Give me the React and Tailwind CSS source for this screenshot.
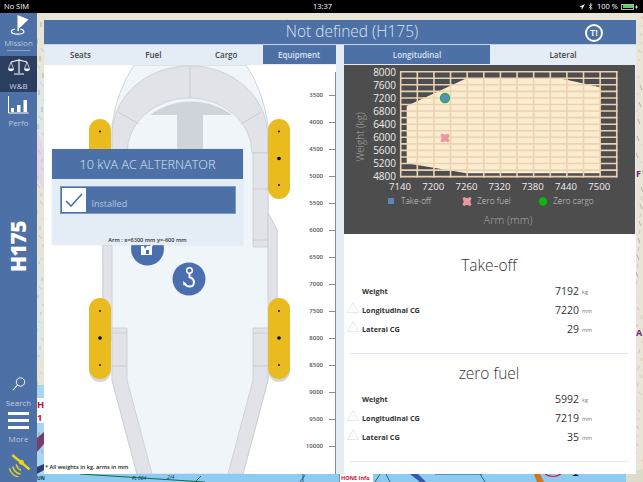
import { Fragment } from 'react';

const font = { fontFamily: '"Open Sans", "Liberation Sans", sans-serif' };

const RULER = ['3500', '4000', '4500', '5000', '5500', '6000', '6500', '7000', '7500', '8000', '8500', '9000', '9500', '10000'];
const Y_LABELS = [8000, 7600, 7200, 6800, 6400, 6000, 5600, 5200, 4800];
const X_LABELS = [7140, 7200, 7260, 7320, 7380, 7440, 7500];

const TAKE_OFF = [
  { label: 'Weight', value: '7192', unit: 'kg' },
  { label: 'Longitudinal CG', value: '7220', unit: 'mm', warn: true },
  { label: 'Lateral CG', value: '29', unit: 'mm', warn: true },
];
const ZERO_FUEL = [
  { label: 'Weight', value: '5992', unit: 'kg' },
  { label: 'Longitudinal CG', value: '7219', unit: 'mm', warn: true },
  { label: 'Lateral CG', value: '35', unit: 'mm', warn: true },
];

function MapBackground() {
  const specks = [];
  for (let i = 0; i < 150; i++) {
    const y = 13 + (i * 37) % 461;
    const left = i % 3 === 0;
    const x = left ? 37 + (i * 5) % 7 : i % 3 === 1 ? 636 + (i * 3) % 7 : 37 + (i * 41) % 600;
    specks.push(<path key={i} d={`M${x} ${y}l${3 - (i % 6)} ${2 + (i % 4)}`} stroke={['#b9c7a8', '#c9a98c', '#a9b7c0', '#8f8f7f'][i % 4]} strokeWidth="0.6" fill="none" />);
  }
  return (
    <svg className="absolute inset-0" width="643" height="482" viewBox="0 0 643 482">
      <rect width="643" height="482" fill="#e9e5d6" />
      <path d="M37 60l7 30v50l-7 30zM37 250l7 40v60l-7 20z" fill="#dfe8e4" />
      <path d="M37 130l7 20v40l-7-10z" fill="#e4d8e4" />
      <path d="M37 385h7v89h-7z" fill="#a9d6f2" />
      <path d="M37 474h606v8H37z" fill="#8fcbf0" />
      <path d="M626 474l17-5v13h-17z" fill="#dcdccb" />
      {specks}
      <path d="M37 398h7v25h-7z" fill="#fff" />
      <text x="37" y="408" fontSize="9.500" fontWeight="700" fill="#c8102e" style={font}>H</text>
      <text x="37" y="421" fontSize="9.500" fontWeight="700" fill="#c8102e" style={font}>1</text>
      <path d="M37 452l7-8v-12l-7 6z" fill="#7a3b6e" />
      <path d="M37 474l7-4v-6l-7 3z" fill="#2b3f73" />
      <text x="636" y="177" fontSize="9" fontWeight="700" fill="#7d1a86" style={font}>F</text>
      <text x="636" y="336" fontSize="9" fontWeight="700" fill="#7d1a86" style={font}>A</text>
      <path d="M80 474l125 8M195 482l6-6" stroke="#0f6a54" strokeWidth="1" fill="none" />
      <path d="M300 482l5-7M303 474v8M340 474v8M375 482l5-8M386 474l4 8" stroke="#17495a" strokeWidth="0.8" fill="none" />
      <path d="M410 474l10 8h6l-8-8z" fill="#3458a4" />
      <path d="M435 474h47M480 474l5 8" stroke="#1a6a8c" strokeWidth="1" fill="none" />
      <path d="M534 474h6l4 8h-7z" fill="#d0761e" />
      <path d="M545 474q8 5 16 0" stroke="#d01c38" strokeWidth="1.2" fill="none" />
      <path d="M572 476l4-2 3 2z" fill="#111" />
      <path d="M340 474h33v8h-33z" fill="#fff" />
      <text x="341" y="480" fontSize="5.500" fontWeight="700" fill="#c8102e" style={font}>HONE Info</text>
      <text x="132" y="480" fontSize="5" fontStyle="italic" fill="#134" style={font}>FL 064</text>
      <text x="37" y="480" fontSize="5" fontWeight="700" fill="#134" style={font}>UN</text>
      <text x="167" y="479" fontSize="5" fontStyle="italic" fill="#134" style={font}>2/4</text>
    </svg>
  );
}

function StatusBar() {
  return (
    <div className="relative h-[13px] bg-black text-white flex items-center justify-between px-[4px] text-[7.5px]">
      <span>No SIM</span>
      <span className="absolute left-[313px] top-0 leading-[13px] text-[7.5px]">13:37</span>
      <div className="flex items-center gap-[3px] pr-[1px]">
        <svg width="6" height="6" viewBox="0 0 10 10"><path d="M10 0L0 5h4.500V10z" fill="#fff" /></svg>
        <svg width="5" height="7" viewBox="0 0 6 10"><path d="M0.500 2.500l5 5L3 9.500V0.500l2.500 2-5 5" stroke="#fff" strokeWidth="0.9" fill="none" /></svg>
        <span className="ml-[1px]">100 %</span>
        <div className="w-[13px] h-[6px] border border-white/70 p-[0.5px] flex"><div className="flex-1 bg-[#4cd964]" /></div>
        <svg width="3" height="6" viewBox="0 0 6 10" className="-ml-[2px]"><path d="M4 0L0 6h2.500L2 10l4-6H3.500z" fill="#fff" /></svg>
      </div>
    </div>
  );
}

function SideLabel({ children, className = '' }) {
  return <span className={`block text-center text-[8px] leading-[10px] text-[#b9c8df] ${className}`}>{children}</span>;
}

function Sidebar() {
  return (
    <aside className="w-[37px] bg-[#4d70a6] flex flex-col items-center">
      <div className="w-full h-[43px] flex flex-col items-center pt-[2px]">
        <svg width="20" height="20" viewBox="0 0 20 20">
          <path d="M8.500 0L19.500 4.500 10 13.500V16H8.500z" fill="#fff" />
          <path d="M6 14c-5 1-5.500 5 2.500 5.200s8-4 3-5" stroke="#fff" strokeWidth="1.200" fill="none" />
        </svg>
        <SideLabel className="mt-[3px]">Mission</SideLabel>
        <div className="mt-[2px] w-[23px] h-px bg-[#8aa3c7]" />
      </div>
      <div className="w-full h-[36px] bg-[#2b3e5f] flex flex-col items-center pt-[3px]">
        <svg width="22" height="16" viewBox="0 0 22 16">
          <path d="M11 0v14M6 15h10M3 3l8-2 8 2" stroke="#fff" strokeWidth="1.100" fill="none" />
          <path d="M0.500 9.500l2.500-6.500 2.500 6.500M16.500 9.500l2.500-6.500 2.500 6.500" stroke="#fff" strokeWidth="0.700" fill="none" />
          <path d="M0 9.500h6c0 3.500-6 3.500-6 0zM16 9.500h6c0 3.500-6 3.500-6 0z" fill="#fff" />
        </svg>
        <SideLabel className="mt-[6px] text-[#c3cfe2]">W&amp;B</SideLabel>
      </div>
      <div className="w-full flex flex-col items-center pt-[4px]">
        <svg width="21" height="18" viewBox="0 0 21 18">
          <path d="M0.500 0v17h20" stroke="#fff" strokeWidth="1" fill="none" />
          <path d="M3 12h3v4H3zM9 9h3.500v7H9zM15.500 4H19v12h-3.500z" fill="#fff" />
        </svg>
        <SideLabel className="mt-[4px]">Perfo</SideLabel>
      </div>
      <div className="mt-[92px] h-[54px] flex items-center justify-center">
        <span className="[writing-mode:vertical-rl] rotate-180 text-white font-extrabold text-[21px] leading-none tracking-[-0.5px]">H175</span>
      </div>
      <svg width="14" height="14" viewBox="0 0 14 14" className="mt-auto mb-[7px]">
        <circle cx="8.500" cy="5" r="4.200" stroke="#fff" strokeWidth="0.900" fill="none" />
        <path d="M5.500 8L1 13" stroke="#fff" strokeWidth="1.100" />
      </svg>
      <SideLabel className="mb-[4px] text-[#c3cfe2]">Search</SideLabel>
      <div className="w-[21px] flex flex-col gap-[4px] mb-[5px]">
        <div className="h-[3px] bg-white" />
        <div className="h-[3px] bg-white" />
        <div className="h-[3px] bg-white" />
      </div>
      <SideLabel className="mb-[10px]">More</SideLabel>
      <svg width="24" height="23" viewBox="0 0 24 24" className="mb-[5px]">
        <path d="M5 1l18 15" stroke="#e8d520" strokeWidth="2.600" />
        <circle cx="14.500" cy="8.500" r="2.600" fill="#e8d520" />
        <path d="M9 11c1 3 2 5 5 6M5.500 13c1 4 3.500 7 8 8M2 15c1.500 4.500 4.500 8 9.500 9" stroke="#e8d520" strokeWidth="1.500" fill="none" />
      </svg>
    </aside>
  );
}

function Fuselage() {
  return (
    <svg className="absolute left-0 top-0" width="292" height="409" viewBox="44 65 292 409">
      {/* cabin */}
      <path d="M134 65H246Q263 90 268 125V213L277 230V340H268V380L243 474H137L112 380V340H103V230L112 213V125Q117 90 134 65z" fill="#f0f5fa" stroke="#c8ccd3" strokeWidth="0.800" />
      {/* rear canopy arch */}
      <path d="M112 153V135A77.500 69 0 0 1 267.500 135V153H252A62.500 55 0 0 0 127 153z" fill="#e1e3e8" stroke="#c8ccd3" strokeWidth="0.800" />
      <path d="M150 115A62.500 55 0 0 1 232 115z" fill="#cfd3da" />
      <path d="M177 115h26v60h-26z" fill="#cfd3da" />
      <path d="M190 66v32M118 112l21 12M261 112l-20 12" stroke="#c8ccd3" strokeWidth="1" />
      {/* side rails */}
      <path d="M253 153h15v94h-15zM253 189h15M253 240h15" fill="#e1e3e8" stroke="#c8ccd3" strokeWidth="0.800" />
      <path d="M103 245h9v95h-9zM268 213l9 17v110h-9z" fill="#e1e3e8" stroke="#c8ccd3" strokeWidth="0.800" />
      <path d="M112 328h15v38h-15zM253 328h15v38h-15z" fill="#e1e3e8" stroke="#c8ccd3" strokeWidth="0.800" />
      <path d="M112 333h15M253 333h15" stroke="#c8ccd3" strokeWidth="0.800" />
      <path d="M112 366h15v14l25 94h-15l-25-94zM268 366h-15v14l-25 94h15l25-94z" fill="#e1e3e8" stroke="#c8ccd3" strokeWidth="0.800" />
      {/* seats */}
      {[100, 279].map((x) => (
        <Fragment key={x}>
          <rect x={x - 11} y="301" width="22" height="81" rx="11" fill="#d5d6da" />
          <rect x={x - 11} y="119" width="22" height="80" rx="11" fill="#e9bb1f" />
          <rect x={x - 11} y="298" width="22" height="81" rx="11" fill="#e9bb1f" />
          <circle cx={x} cy="131.500" r="0.900" fill="#000" />
          <circle cx={x} cy="158.500" r="1.800" fill="#000" />
          <circle cx={x} cy="185" r="0.900" fill="#000" />
          <circle cx={x} cy="311" r="0.900" fill="#000" />
          <circle cx={x} cy="338" r="1.800" fill="#000" />
          <circle cx={x} cy="365" r="0.900" fill="#000" />
        </Fragment>
      ))}
      {/* equipment markers */}
      <circle cx="147.500" cy="249" r="16.500" fill="#4b6fae" />
      <path d="M141 246h3l1 3 2-3h3l2-3 2 0-2 4v8h-11z" fill="#fff" />
      <path d="M146 254v-4h3v4z" fill="#4b6fae" />
      <circle cx="189" cy="279" r="16.500" fill="#4b6fae" />
      <circle cx="189.500" cy="270.500" r="2.800" stroke="#fff" strokeWidth="1.500" fill="none" />
      <path d="M189.500 273.500v3.500c4 1.500 5.500 4.500 4 7.500s-7.500 3-9-1.500" stroke="#fff" strokeWidth="2" fill="none" />
      <path d="M183 281l3.500 3-3 1.500z" fill="#fff" />
    </svg>
  );
}

function EquipmentCard() {
  return (
    <div className="absolute left-[8px] top-[84px] w-[191px] h-[96px] bg-[#e4ecf6] flex flex-col items-center shadow-[0_0_1px_#c5cfdd]">
      <div className="w-full h-[30px] pt-[2px] bg-[#4d70a6] text-[#dbe5f2] text-[12.6px] font-light flex items-center justify-center">10 kVA AC ALTERNATOR</div>
      <div className="mt-[7px] w-[176px] h-[28px] bg-[#4d70a6] border border-[#7f9cc6] flex items-center pl-[1px]">
        <div className="w-[24px] h-[24px] bg-white flex items-center justify-center">
          <svg width="18" height="14" viewBox="0 0 18 14"><path d="M1 8l5 5L17 1" stroke="#4d70a6" strokeWidth="1.600" fill="none" /></svg>
        </div>
        <span className="ml-[6px] mt-[8px] text-[9px] text-[#b9c8df]">Installed</span>
      </div>
      <span className="mt-auto mb-[1px] text-[5.6px] font-semibold text-[#333]">Arm : x=6300 mm y=-600 mm</span>
    </div>
  );
}

function Ruler() {
  return (
    <div className="absolute right-0 top-[7px] bottom-0 w-[40px] border-r border-[#8c8c8c] pt-[10px]">
      {RULER.map((v) => (
        <div key={v} className="h-[27px] flex items-center justify-end gap-[6px]">
          <span className="text-[6px] font-semibold text-[#555]">{v}</span>
          <div className="w-[6px] h-px bg-[#8c8c8c]" />
        </div>
      ))}
    </div>
  );
}

function Chart() {
  const cols = Array.from({ length: 14 }, (_, i) => 56.700 + i * 16.620);
  const rows = Array.from({ length: 17 }, (_, i) => 6.700 + i * 6.560);
  return (
    <svg width="291" height="169" viewBox="0 0 291 169" className="block bg-[#4d4d4d]" style={font}>
      <path d="M62.700 41L122.700 13.300H216L256 22.300V108.300H122.700L62.700 98.300z" fill="#fbeccf" />
      {cols.map((x) => <path key={x} d={`M${x} 6V112.500`} stroke="#ebd2b3" strokeWidth="1.600" />)}
      {rows.map((y) => <path key={y} d={`M56 ${y}H273.500`} stroke="#ebd2b3" strokeWidth="1.600" />)}
      {Y_LABELS.map((v, i) => (
        <text key={v} x="52" y={10.500 + i * 13.120} textAnchor="end" fontSize="10" fill="#eee">{v}</text>
      ))}
      {X_LABELS.map((v, i) => (
        <text key={v} x={56 + i * 33.200} y="125" textAnchor="middle" fontSize="9.600" fill="#eee">{v}</text>
      ))}
      <text transform="translate(20 72) rotate(-90)" textAnchor="middle" fontSize="10" fontWeight="300" fill="#a8a8a8">Weight (kg)</text>
      <text x="164" y="159" textAnchor="middle" fontSize="11" fontWeight="300" fill="#a8a8a8">Arm (mm)</text>

      <circle cx="101" cy="33" r="4.500" fill="#5a8cc0" stroke="#1faa55" strokeWidth="1.300" />
      <path d="M98 68.500l3 1.200 3-1.200 1.500 1.500-1.200 3 1.200 3-1.500 1.500-3-1.200-3 1.200-1.500-1.500 1.200-3-1.200-3z" fill="#e89aa0" />

      <rect x="44" y="133" width="6" height="6" fill="#5d86bd" />
      <text x="57" y="139" fontSize="8.400" fontWeight="300" fill="#cfcfcf">Take-off</text>
      <path d="M120 132l3 1.200 3-1.200 1.500 1.500-1.200 3 1.200 3-1.500 1.500-3-1.200-3 1.200-1.500-1.500 1.200-3-1.200-3z" fill="#e89aa0" />
      <text x="133" y="139" fontSize="8.400" fontWeight="300" fill="#cfcfcf">Zero fuel</text>
      <circle cx="199" cy="136.500" r="4.200" fill="#12b312" />
      <text x="209" y="139" fontSize="8.400" fontWeight="300" fill="#cfcfcf">Zero cargo</text>
    </svg>
  );
}

function WarnIcon() {
  return (
    <svg width="12" height="11" viewBox="0 0 12 11" className="absolute -left-[3px] -top-[1px]">
      <path d="M6 0.500L11.500 10.500H0.500z" stroke="#d8d8d8" strokeWidth="0.600" fill="none" />
      <path d="M4 9L7 5" stroke="#e2e2e2" strokeWidth="0.500" />
    </svg>
  );
}

function ResultBlock({ title, rows, className = '' }) {
  return (
    <div className={`pl-[6px] pr-[8px] ${className}`}>
      <h2 className="text-center text-[15.500px] leading-[22px] font-light text-[#333]">{title}</h2>
      <div className="mt-[8px] flex flex-col gap-[5px]">
        {rows.map((r) => (
          <div key={r.label} className="relative h-[14px] flex items-center">
            {r.warn && <WarnIcon />}
            <span className="ml-[12px] text-[7.3px] font-bold text-[#333]">{r.label}</span>
            <span className="absolute left-0 top-0 w-[229px] text-right text-[10.500px] leading-[14px] text-[#333]">{r.value}</span>
            <span className="absolute left-[232px] top-[4px] text-[5.500px] leading-[8px] text-[#777]">{r.unit}</span>
          </div>
        ))}
      </div>
      <div className="mt-[17px] h-px bg-[#dfe7f2]" />
    </div>
  );
}

export default function App() {
  const tab = 'h-[19px] flex items-center justify-center text-[8px] font-semibold';
  return (
    <div className="relative w-[643px] h-[482px] overflow-hidden" style={font}>
      <MapBackground />
      <div className="relative"><StatusBar /></div>
      <div className="relative flex h-[469px]">
        <Sidebar />
        <main className="ml-[7px] mt-[7px] w-[592px] h-[454px] bg-white flex flex-col">
          <header className="relative h-[25px] bg-[#4d70a6] pl-[24px] flex items-center justify-center text-[#dbe5f2] text-[15.500px] font-light border-b border-[#c7d4e6]">
            Not defined (H175)
            <div className="absolute left-[541px] top-[4px] w-[18px] h-[18px] rounded-full border-2 border-white text-white text-[9.500px] font-semibold leading-[14px] text-center">T!</div>
          </header>
          <div className="flex-1 flex bg-[#e4ecf6]">
            <section className="w-[292px] flex flex-col">
              <div className="h-[20px] grid grid-cols-4 pr-[0.500px] text-[#444]">
                <div className={tab}>Seats</div>
                <div className={tab}>Fuel</div>
                <div className={tab}>Cargo</div>
                <div className={`${tab} bg-[#4d70a6] text-[#dbe5f2]`}>Equipment</div>
              </div>
              <div className="relative flex-1 bg-white overflow-hidden">
                <Fuselage />
                <Ruler />
                <EquipmentCard />
                <span className="absolute left-[1px] bottom-[3px] text-[5.6px] font-semibold text-[#222]">* All weights in kg, arms in mm</span>
              </div>
            </section>
            <section className="ml-[8px] w-[292px] flex flex-col">
              <div className="h-[20px] grid grid-cols-2 text-[#444]">
                <div className={`${tab} bg-[#4d70a6] text-[#dbe5f2]`}>Longitudinal</div>
                <div className={tab}>Lateral</div>
              </div>
              <Chart />
              <div className="flex-1 bg-white pt-[20px]">
                <ResultBlock title="Take-off" rows={TAKE_OFF} />
                <ResultBlock title="zero fuel" rows={ZERO_FUEL} className="mt-[8px]" />
              </div>
            </section>
          </div>
        </main>
      </div>
    </div>
  );
}
